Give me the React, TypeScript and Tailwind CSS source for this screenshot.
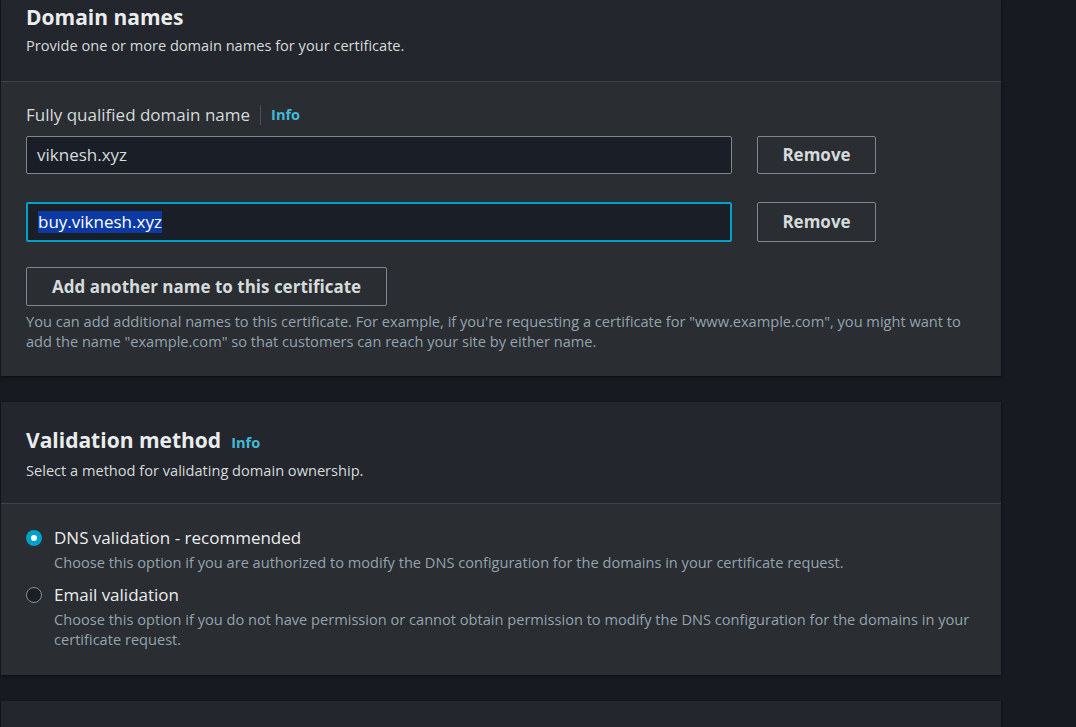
import React from 'react';

const FONT = { fontFamily: '"Open Sans", "Noto Sans", sans-serif' };

function InfoLink() {
  return <span className="text-[14.6px] font-bold text-[#44b9d6]">Info</span>;
}

function DomainRow({ value, focused }: { value: string; focused?: boolean }) {
  return (
    <div className="flex items-center gap-[25px]">
      <div
        className={
          focused
            ? 'flex h-[40px] w-[706px] items-center rounded-[2px] border-2 border-[#00a1c9] bg-[#1a1f27] px-[10px]'
            : 'flex h-[38px] w-[706px] items-center rounded-[2px] border border-[#7f868d] bg-[#1a1f27] px-[10px]'
        }
      >
        {focused ? (
          <span className="bg-[#0b3aa5] text-[17px] leading-[22px] text-white">{value}</span>
        ) : (
          <span className="text-[17px] leading-[22px] text-[#d5dbdb]">{value}</span>
        )}
      </div>
      <button
        className={`flex w-[119px] items-center justify-center rounded-[2px] border border-[#7f868d] text-[17px] font-bold text-[#d5dbdb] ${
          focused ? 'h-[40px]' : 'h-[38px]'
        }`}
      >
        Remove
      </button>
    </div>
  );
}

function Radio({ checked }: { checked?: boolean }) {
  return checked ? (
    <span className="flex h-[16px] w-[16px] shrink-0 items-center justify-center rounded-full bg-[#00a1c9]">
      <span className="h-[6px] w-[6px] rounded-full bg-white" />
    </span>
  ) : (
    <span className="h-[16px] w-[16px] shrink-0 rounded-full border-[1.5px] border-[#8a9096] bg-[#1a1f27]" />
  );
}

function RadioOption({
  checked,
  label,
  description,
}: {
  checked?: boolean;
  label: string;
  description: string;
}) {
  return (
    <div className="flex gap-[12px]">
      <div className="flex h-[22px] items-center">
        <Radio checked={checked} />
      </div>
      <div className="flex flex-col">
        <span className="text-[17px] leading-[22px] text-[#eaeded]">{label}</span>
        <span className="mt-[3px] text-[14.6px] leading-[20px] text-[#95a3ae]">{description}</span>
      </div>
    </div>
  );
}

export default function App() {
  return (
    <div className="min-h-screen overflow-hidden bg-[#171a21] pl-px" style={FONT}>
      <div className="flex w-[1000px] flex-col gap-[26px]">
        {/* Domain names */}
        <section className="shadow-[0_1px_3px_rgba(0,0,0,0.6)]">
          <div className="border-b border-[#3e434b] bg-[#23262c] px-[25px] pb-[26px] pt-[3px]">
            <h2 className="text-[21px] font-bold leading-[28px] text-[#eaeded]">Domain names</h2>
            <p className="mt-[4px] text-[14.6px] leading-[20px] text-[#d5dbdb]">
              Provide one or more domain names for your certificate.
            </p>
          </div>
          <div className="bg-[#2a2d32] px-[25px] pb-[25px] pt-[22px]">
            <div className="flex items-center gap-[10px]">
              <span className="text-[17px] leading-[22px] text-[#d5dbdb]">Fully qualified domain name</span>
              <span className="h-[20px] w-px bg-[#4b5058]" />
              <InfoLink />
            </div>
            <div className="mt-[10px] flex flex-col gap-[28px]">
              <DomainRow value="viknesh.xyz" />
              <DomainRow value="buy.viknesh.xyz" focused />
            </div>
            <button className="mt-[25px] h-[39px] rounded-[2px] border border-[#7f868d] px-[25px] text-[17px] font-bold text-[#d5dbdb]">
              Add another name to this certificate
            </button>
            <p className="mt-[5px] text-[14.6px] leading-[20px] text-[#95a3ae]">
              You can add additional names to this certificate. For example, if you're requesting a certificate for
              "www.example.com", you might want to add the name "example.com" so that customers can reach your site by
              either name.
            </p>
          </div>
        </section>

        {/* Validation method */}
        <section className="shadow-[0_1px_3px_rgba(0,0,0,0.6)]">
          <div className="border-b border-[#3e434b] bg-[#23262c] px-[25px] pb-[23px] pt-[24px]">
            <h2 className="flex items-baseline gap-[10px] text-[21px] font-bold leading-[28px] text-[#eaeded]">
              Validation method <InfoLink />
            </h2>
            <p className="mt-[4px] text-[14.6px] leading-[20px] text-[#d5dbdb]">
              Select a method for validating domain ownership.
            </p>
          </div>
          <div className="flex flex-col gap-[12px] bg-[#2a2d32] px-[25px] pb-[26px] pt-[23px]">
            <RadioOption
              checked
              label="DNS validation - recommended"
              description="Choose this option if you are authorized to modify the DNS configuration for the domains in your certificate request."
            />
            <RadioOption
              label="Email validation"
              description="Choose this option if you do not have permission or cannot obtain permission to modify the DNS configuration for the domains in your certificate request."
            />
          </div>
        </section>

        <section className="h-[80px] bg-[#23262c] shadow-[0_1px_3px_rgba(0,0,0,0.6)]" />
      </div>
    </div>
  );
}
